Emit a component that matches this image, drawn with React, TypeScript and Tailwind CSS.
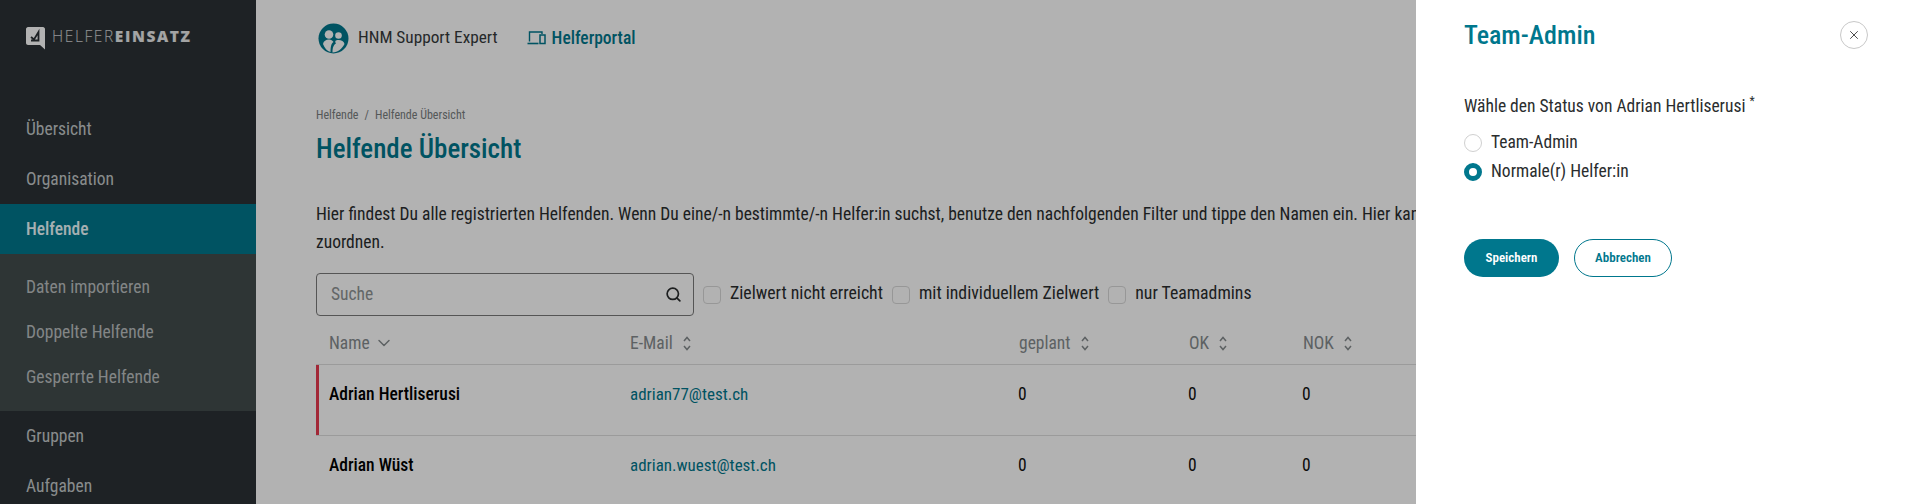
import React from "react";
import { ChevronDown, Search, X } from "lucide-react";

const Logo = () => (
  <div className="flex items-center gap-[7px]">
    <svg width="19" height="23" viewBox="0 0 19 23">
      <path d="M2 0H17C18 0 19 1 19 2V22.500L14 18H2C1 18 0 17 0 16V2C0 1 1 0 2 0Z" fill="#fff" />
      <path d="M5 10L8 12.500L12.500 5V13.500H5" fill="none" stroke="#2b3235" strokeWidth="1.800" />
    </svg>
    <div className="text-[15.5px] leading-none text-white/80 tracking-[1.6px] font-['Open_Sans',sans-serif] font-stretch-normal flex mt-[-3px]">
      <span className="font-light">HELFER</span>
      <span className="font-extrabold text-white/90">EINSATZ</span>
    </div>
  </div>
);

const MainNavItem = ({ label, active }: { label: string; active?: boolean }) => (
  <div
    className={`h-[50px] pl-[26px] flex items-center text-[17.5px] font-[450] ${
      active ? "bg-[#00778d] text-[#eefcff] font-medium" : "text-[#c5c9ca]"
    }`}
  >
    {label}
  </div>
);

const SubNavItem = ({ label }: { label: string }) => (
  <div className="h-[45px] pl-[26px] flex items-center text-[17.5px] font-[450] text-[#bcc0c1]">{label}</div>
);

const Sidebar = () => (
  <div className="w-[256px] h-[504px] shrink-0 bg-[#2b3235] overflow-hidden">
    <div className="h-[104px] pl-[26px] pt-[27px]">
      <Logo />
    </div>
    <MainNavItem label="Übersicht" />
    <MainNavItem label="Organisation" />
    <MainNavItem label="Helfende" active />
    <div className="bg-[#434c4d] py-[11px]">
      <SubNavItem label="Daten importieren" />
      <SubNavItem label="Doppelte Helfende" />
      <SubNavItem label="Gesperrte Helfende" />
    </div>
    <MainNavItem label="Gruppen" />
    <MainNavItem label="Aufgaben" />
  </div>
);

const Filter = ({ label }: { label: string }) => (
  <div className="flex items-center gap-[9px] text-[17.75px] text-[#2a2d2e] font-[450]">
    <div className="w-[18px] h-[18px] rounded-[4px] border border-[#d8d8d8]" />
    <span className="mb-[2px]">{label}</span>
  </div>
);

const SortIcon = () => (
  <svg width="8" height="15" viewBox="0 0 8 15" fill="none" stroke="currentColor" strokeWidth="1.500">
    <path d="M1 5L4 1.500L7 5" />
    <path d="M1 10L4 13.500L7 10" />
  </svg>
);

const HeaderCell = ({ label, width, sorted }: { label: string; width: string; sorted?: boolean }) => (
  <div className={`${width} flex items-center gap-[10px] text-[17.5px] text-[#868c8e]`}>
    {label}
    {sorted ? <ChevronDown size={20} strokeWidth={1.800} className="ml-[-6px]" /> : <SortIcon />}
  </div>
);

const Row = ({ name, email, warn }: { name: string; email: string; warn?: boolean }) => (
  <div className="relative h-[71px] border-b border-[#dfdfdf] flex items-start pt-[16px] pl-[13px] text-[17.5px] leading-[26px]">
    {warn && <div className="absolute left-0 top-0 bottom-0 w-[3px] bg-[#e83a50]" />}
    <div className="w-[301px] font-medium text-black">{name}</div>
    <div className="w-[388px] text-[17px] text-[#00778d]">{email}</div>
    <div className="w-[170px] text-[#111]">0</div>
    <div className="w-[114px] text-[#111]">0</div>
    <div className="text-[#111]">0</div>
  </div>
);

const Main = () => (
  <div className="flex-1 min-w-0 pl-[60px] overflow-hidden">
    <div className="h-[76px] flex items-center">
      <svg width="31" height="31" viewBox="0 0 31 31" className="ml-[2px]">
        <circle cx="15.500" cy="15.500" r="15" fill="#00778d" />
        <circle cx="11" cy="11.500" r="4.300" fill="#fff" />
        <circle cx="20.500" cy="12.500" r="3.300" fill="#fff" />
        <path d="M5 21C5.500 18 8 16.500 11 16.500C13 16.500 14.500 17.500 15.500 19C13.500 20.500 12.500 22.500 12.500 29C9 28 6.500 25 5 21Z" fill="#fff" />
        <path d="M14.500 29.500C14.500 24.500 15.500 22 18 20.500C16.500 18 17.500 17 20.500 17C23.500 17 26 18.500 26.500 21C24 26 20 29 14.500 29.500Z" fill="#fff" />
      </svg>
      <div className="ml-[9px] text-[17.25px] text-[#363a3c]">HNM Support Expert</div>
      <svg width="19" height="14" viewBox="0 0 19 14" fill="none" stroke="#00778d" className="ml-[29px]">
        <path d="M2.500 10.500V1H15V3" strokeWidth="1.400" />
        <path d="M0.500 12.500H11.500" strokeWidth="1.600" />
        <rect x="13" y="4" width="5" height="8.500" strokeWidth="1.500" />
      </svg>
      <div className="ml-[6px] text-[17.5px] font-medium text-[#00778d]">Helferportal</div>
    </div>
    <div className="mt-[31px] flex gap-[6px] text-[12px] leading-[16px] text-[#7a7e7f]">
      <span>Helfende</span>
      <span>/</span>
      <span>Helfende Übersicht</span>
    </div>
    <h1 className="mt-[9px] text-[27px] leading-[34px] font-medium text-[#00778d]">Helfende Übersicht</h1>
    <div className="mt-[35px] whitespace-nowrap text-[17.5px] leading-[27.5px] text-[#2a2d2e]">
      Hier findest Du alle registrierten Helfenden. Wenn Du eine/-n bestimmte/-n Helfer:in suchst, benutze den
      nachfolgenden Filter und tippe den Namen ein. Hier kannst Du Helfende auch einem Team
      <br />
      zuordnen.
    </div>
    <div className="mt-[17px] flex items-center">
      <div className="w-[378px] h-[43px] rounded-[4px] border border-[#7a7a7a] flex items-center justify-between pl-[14px] pr-[11px] text-[17.5px] text-[#8e9394]">
        Suche
        <Search size={17} strokeWidth={2.400} className="text-[#2a2d2e]" />
      </div>
      <div className="ml-[9px] flex items-center gap-[9px]">
        <Filter label="Zielwert nicht erreicht" />
        <Filter label="mit individuellem Zielwert" />
        <Filter label="nur Teamadmins" />
      </div>
    </div>
    <div className="w-[1200px]">
      <div className="h-[49px] pt-[6px] border-b border-[#dfdfdf] pl-[13px] flex items-center">
        <HeaderCell label="Name" width="w-[301px]" sorted />
        <HeaderCell label="E-Mail" width="w-[389px]" />
        <HeaderCell label="geplant" width="w-[170px]" />
        <HeaderCell label="OK" width="w-[114px]" />
        <HeaderCell label="NOK" width="w-[100px]" />
      </div>
      <Row name="Adrian Hertliserusi" email="adrian77@test.ch" warn />
      <Row name="Adrian Wüst" email="adrian.wuest@test.ch" />
    </div>
  </div>
);

const Panel = () => (
  <div className="absolute top-0 right-0 bottom-0 w-[495px] bg-white pl-[48px] pr-[43px] pt-[20px]">
    <div className="flex items-center justify-between h-[30px]">
      <div className="text-[26px] font-medium text-[#00778d]">Team-Admin</div>
      <div className="w-[28px] h-[28px] rounded-full border border-[#c8c8c8] flex items-center justify-center text-[#333]">
        <X size={14} strokeWidth={1.500} />
      </div>
    </div>
    <div className="mt-[45px] text-[17.5px] leading-[22px] font-[450] text-[#2a2d2e] flex">
      Wähle den Status von Adrian Hertliserusi
      <span className="ml-[4px] text-[12px] leading-[12px]">*</span>
    </div>
    <div className="mt-[15px] flex items-center gap-[9px] h-[22px] text-[17.5px] font-[450] text-[#2a2d2e]">
      <div className="w-[18px] h-[18px] rounded-full border border-[#d0d0d0]" />
      <span className="mb-[2px]">Team-Admin</span>
    </div>
    <div className="mt-[7px] flex items-center gap-[9px] h-[22px] text-[17.5px] font-[450] text-[#2a2d2e]">
      <div className="w-[18px] h-[18px] rounded-full border-[5px] border-[#00778d]" />
      <span className="mb-[2px]">Normale(r) Helfer:in</span>
    </div>
    <div className="mt-[56px] flex gap-[15px] text-[13px] font-semibold">
      <div className="w-[95px] h-[38px] rounded-full bg-[#00778d] text-white flex items-center justify-center">
        Speichern
      </div>
      <div className="w-[98px] h-[38px] rounded-full border border-[#00778d] text-[#00778d] flex items-center justify-center">
        Abbrechen
      </div>
    </div>
  </div>
);

export default function App() {
  return (
    <div className="relative w-[1911px] h-[504px] overflow-hidden bg-white flex font-['Roboto',sans-serif] font-stretch-condensed">
      <Sidebar />
      <Main />
      <div className="absolute inset-0 bg-black/30" />
      <Panel />
    </div>
  );
}
